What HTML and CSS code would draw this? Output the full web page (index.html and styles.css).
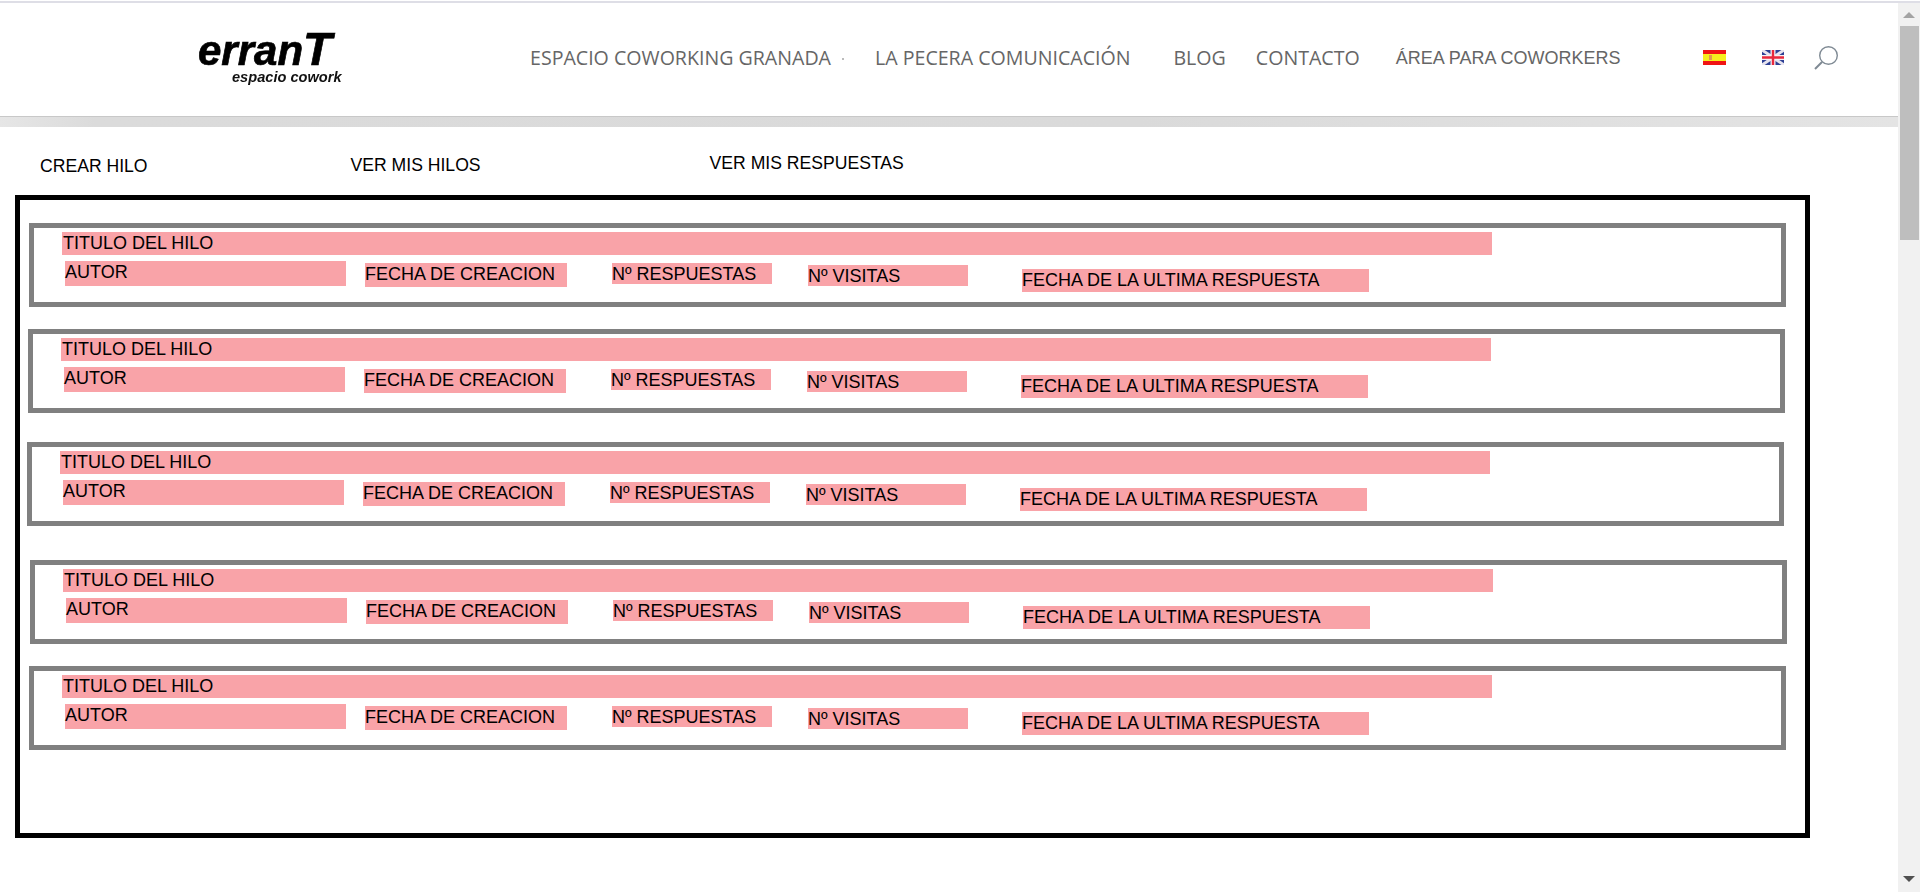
FILE: index.html
```html
<!DOCTYPE html>
<html lang="en">
<head>
    <meta charset="UTF-8">
    <meta name="viewport" content="width=device-width, initial-scale=1.0">
    <title>Foro - erranT espacio cowork</title>
    <link rel="stylesheet" href="styles.css">
</head>
<body>
    <div class="top-line"></div>
    <div class="window">
      <div class="page">
        <header class="site-header">
          <div class="logo">
            <div class="logo-name">erran<span class="logo-t">T</span></div>
            <div class="logo-sub">espacio cowork</div>
          </div>
          <nav class="nav">
            <a class="nav-link nav-espacio">ESPACIO COWORKING GRANADA</a>
            <span class="nav-dot"></span>
            <a class="nav-link nav-pecera">LA PECERA COMUNICACIÓN</a>
            <a class="nav-link nav-blog">BLOG</a>
            <a class="nav-link nav-contacto">CONTACTO</a>
            <a class="nav-link nav-area">ÁREA PARA COWORKERS</a>
          </nav>
          <svg class="flag flag-es" viewBox="0 0 23 15">
            <rect width="23" height="15" fill="#f01414"/>
            <rect y="4" width="23" height="7" fill="#f6ee1e"/>
            <rect x="6" y="5" width="3" height="5" fill="#e09a50"/>
          </svg>
          <svg class="flag flag-en" viewBox="0 0 22 15">
            <rect width="22" height="15" fill="#2c3f94"/>
            <path d="M0 0L22 15M22 0L0 15" stroke="#e8e4ee" stroke-width="3"/>
            <path d="M11 0V15M0 7.5H22" stroke="#f4f0f4" stroke-width="5"/>
            <path d="M11 0V15M0 7.5H22" stroke="#e8283c" stroke-width="2.4"/>
          </svg>
          <svg class="search-icon" viewBox="0 0 26 26">
            <circle cx="15.5" cy="10.5" r="8.8" fill="none" stroke="#7f8a94" stroke-width="1.4"/>
            <path d="M9 17L2 24" stroke="#7f8a94" stroke-width="2"/>
          </svg>
        </header>
        <div class="header-band"></div>

        <div class="actions">
          <a class="action action-crear">CREAR HILO</a>
          <a class="action action-hilos">VER MIS HILOS</a>
          <a class="action action-respuestas">VER MIS RESPUESTAS</a>
        </div>

        <div class="forum">
          <div class="thread thread-1">
            <div class="thread-title">TITULO DEL HILO</div>
            <div class="thread-meta">
              <div class="cell cell-autor">AUTOR</div>
              <div class="cell cell-fecha">FECHA DE CREACION</div>
              <div class="cell cell-respuestas">Nº RESPUESTAS</div>
              <div class="cell cell-visitas">Nº VISITAS</div>
              <div class="cell cell-ultima">FECHA DE LA ULTIMA RESPUESTA</div>
            </div>
          </div>
          <div class="thread thread-2">
            <div class="thread-title">TITULO DEL HILO</div>
            <div class="thread-meta">
              <div class="cell cell-autor">AUTOR</div>
              <div class="cell cell-fecha">FECHA DE CREACION</div>
              <div class="cell cell-respuestas">Nº RESPUESTAS</div>
              <div class="cell cell-visitas">Nº VISITAS</div>
              <div class="cell cell-ultima">FECHA DE LA ULTIMA RESPUESTA</div>
            </div>
          </div>
          <div class="thread thread-3">
            <div class="thread-title">TITULO DEL HILO</div>
            <div class="thread-meta">
              <div class="cell cell-autor">AUTOR</div>
              <div class="cell cell-fecha">FECHA DE CREACION</div>
              <div class="cell cell-respuestas">Nº RESPUESTAS</div>
              <div class="cell cell-visitas">Nº VISITAS</div>
              <div class="cell cell-ultima">FECHA DE LA ULTIMA RESPUESTA</div>
            </div>
          </div>
          <div class="thread thread-4">
            <div class="thread-title">TITULO DEL HILO</div>
            <div class="thread-meta">
              <div class="cell cell-autor">AUTOR</div>
              <div class="cell cell-fecha">FECHA DE CREACION</div>
              <div class="cell cell-respuestas">Nº RESPUESTAS</div>
              <div class="cell cell-visitas">Nº VISITAS</div>
              <div class="cell cell-ultima">FECHA DE LA ULTIMA RESPUESTA</div>
            </div>
          </div>
          <div class="thread thread-5">
            <div class="thread-title">TITULO DEL HILO</div>
            <div class="thread-meta">
              <div class="cell cell-autor">AUTOR</div>
              <div class="cell cell-fecha">FECHA DE CREACION</div>
              <div class="cell cell-respuestas">Nº RESPUESTAS</div>
              <div class="cell cell-visitas">Nº VISITAS</div>
              <div class="cell cell-ultima">FECHA DE LA ULTIMA RESPUESTA</div>
            </div>
          </div>
        </div>
      </div>

      <div class="scrollbar">
        <div class="scroll-arrow"></div>
        <div class="scroll-thumb"></div>
        <div class="scroll-arrow-down"></div>
      </div>
    </div>
</body>
</html>
```

FILE: styles.css
```css
html, body {
    height: 100%;
}

body {
    margin: 0;
    padding-top: 1px;
    box-sizing: border-box;
    background-color: #fff;
    font-family: "Liberation Sans", Arial, sans-serif;
    color: #000;
    overflow: hidden;
}

.top-line {
    height: 2px;
    width: 1920px;
    background-color: #dedee6;
}

.window {
    display: flex;
    height: 889px;
    width: 1920px;
}

.page {
    width: 1898px;
    flex-shrink: 0;
}

/* header */
.site-header {
    display: flex;
    align-items: flex-start;
    height: 114px;
    box-sizing: border-box;
    border-bottom: 1px solid #c8c8c8;
}

.header-band {
    height: 10px;
    background: linear-gradient(to right, #e6e6e6 0, #dbdbdb 5%, #dadada 60%, #e4e4e4 100%);
}

.logo {
    width: 198px;
    margin: 31px 0 0 198px;
    height: 56px;
}

.logo-name {
    font-size: 42px;
    font-weight: bold;
    font-style: italic;
    line-height: 30px;
    -webkit-text-stroke: 0.7px #000;
    filter: blur(0.4px);
}

.logo-t {
    font-size: 47px;
    line-height: 30px;
}

.logo-sub {
    font-size: 14.6px;
    font-weight: bold;
    font-style: italic;
    line-height: 14px;
    margin: 4px 0 0 34px;
    color: #111;
    filter: blur(0.3px);
}

.nav {
    display: flex;
    margin: 43px 0 0 134px;
    color: #666;
    font-size: 18px;
    line-height: 24px;
    white-space: nowrap;
}

.nav-link {
    display: block;
}

.nav-espacio, .nav-pecera, .nav-blog, .nav-contacto {
    font-family: "Open Sans", sans-serif;
    font-size: 19.6px;
}

.nav-dot {
    display: block;
    width: 2px;
    height: 2px;
    margin: 12px 0 0 11px;
    background-color: #bbb;
}

.nav-pecera { margin-left: 31px; }
.nav-blog { margin-left: 43px; }
.nav-contacto { margin-left: 30px; }
.nav-area { margin-left: 36px; }

.flag {
    display: block;
    height: 15px;
    flex-shrink: 0;
    filter: blur(0.5px);
}

.flag-es {
    width: 23px;
    margin: 47px 0 0 83px;
}

.flag-en {
    width: 22px;
    margin: 47px 0 0 36px;
}

.search-icon {
    display: block;
    width: 26px;
    height: 26px;
    margin: 42px 0 0 29px;
    flex-shrink: 0;
}

/* links above the forum box */
.actions {
    display: flex;
    align-items: flex-start;
    height: 68px;
    font-size: 17.6px;
    white-space: nowrap;
}

.action {
    display: block;
    line-height: 20px;
}

.action-crear { margin: 29px 0 0 40px; }
.action-hilos { margin: 28px 0 0 203px; }
.action-respuestas { margin: 26px 0 0 229px; }

/* forum box */
.forum {
    width: 1795px;
    height: 643px;
    margin-left: 15px;
    box-sizing: border-box;
    border: 5px solid #000;
    overflow: hidden;
}

.thread {
    width: 1757px;
    height: 84px;
    box-sizing: border-box;
    border: 5px solid #808080;
    padding: 4px 0 0 28px;
}

.thread-1 { margin: 23px 0 0 9px; }
.thread-2 { margin: 22px 0 0 8px; }
.thread-3 { margin: 29px 0 0 7px; }
.thread-4 { margin: 34px 0 0 10px; }
.thread-5 { margin: 22px 0 0 9px; }

.thread-title {
    width: 1430px;
    height: 23px;
    background-color: #f9a3a8;
    font-size: 18px;
    line-height: 22px;
    padding-left: 1px;
    box-sizing: border-box;
    white-space: nowrap;
}

.thread-meta {
    display: flex;
    align-items: flex-start;
    font-size: 18px;
    line-height: 23px;
    white-space: nowrap;
}

.cell {
    background-color: #f9a3a8;
    flex-shrink: 0;
}

.cell-autor { width: 281px; height: 25px; margin: 6px 0 0 3px; }
.cell-fecha { width: 202px; height: 24px; margin: 8px 0 0 19px; }
.cell-respuestas { width: 160px; height: 21px; margin: 8px 0 0 45px; }
.cell-visitas { width: 160px; height: 21px; margin: 10px 0 0 36px; }
.cell-ultima { width: 347px; height: 23px; margin: 14px 0 0 54px; }

/* fake browser scrollbar */
.scrollbar {
    width: 22px;
    background-color: #f1f1f1;
    display: flex;
    flex-direction: column;
    align-items: center;
}

.scroll-arrow {
    width: 0;
    height: 0;
    margin-top: 9px;
    border-left: 6px solid transparent;
    border-right: 6px solid transparent;
    border-bottom: 6px solid #a3a3a3;
}

.scroll-thumb {
    width: 19px;
    height: 214px;
    margin-top: 8px;
    background-color: #bebebe;
}

.scroll-arrow-down {
    width: 0;
    height: 0;
    margin-top: auto;
    margin-bottom: 10px;
    border-left: 6px solid transparent;
    border-right: 6px solid transparent;
    border-top: 6px solid #505050;
}
```
